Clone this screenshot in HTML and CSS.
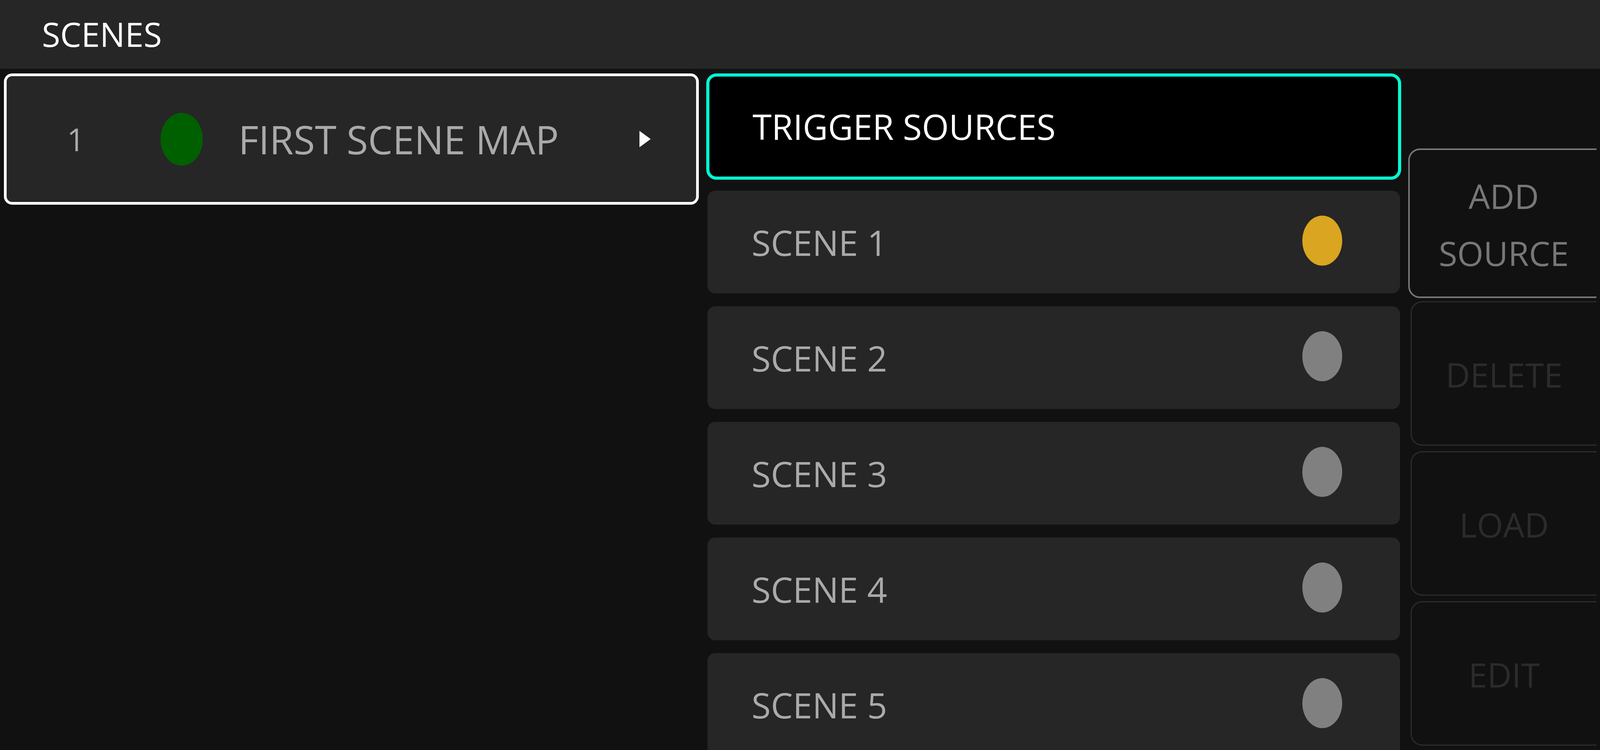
FILE: index.html
```html
<!DOCTYPE html>
<html lang="en">
<head>
<meta charset="utf-8">
<title>Scenes</title>
<link rel="stylesheet" href="styles.css">
</head>
<body>
<header class="topbar">
  <h1 class="topbar-title">SCENES</h1>
</header>
<main class="workspace">
  <section class="maps">
    <div class="map-card">
      <span class="map-num">1</span>
      <span class="map-dot"></span>
      <span class="map-name">FIRST SCENE MAP</span>
      <svg class="map-arrow" viewBox="0 0 36 42" preserveAspectRatio="none"><polygon points="0,0 36,21 0,42" fill="#fff"/></svg>
    </div>
  </section>
  <section class="sources">
    <div class="sources-head">TRIGGER SOURCES</div>
    <div class="source-row"><span class="source-name">SCENE 1</span><span class="dot dot-active"></span></div>
    <div class="source-row"><span class="source-name">SCENE 2</span><span class="dot"></span></div>
    <div class="source-row"><span class="source-name">SCENE 3</span><span class="dot"></span></div>
    <div class="source-row"><span class="source-name">SCENE 4</span><span class="dot"></span></div>
    <div class="source-row"><span class="source-name">SCENE 5</span><span class="dot"></span></div>
  </section>
  <aside class="actions">
    <div class="action action-primary"><span>ADD<br>SOURCE</span></div>
    <div class="action action-disabled"><span>DELETE</span></div>
    <div class="action action-disabled"><span>LOAD</span></div>
    <div class="action action-disabled"><span>EDIT</span></div>
  </aside>
</main>
</body>
</html>
```
FILE: styles.css
```css
/* Horizontal measures are in vw (designed on a 5120px-wide screen, 1vw = 51.2px);
   vertical measures are in px (1920px-tall screen). */
html, body {
  margin: 0;
  padding: 0;
}
body {
  width: 100vw;
  height: 1920px;
  overflow: hidden;
  background: #111111;
  font-family: "Open Sans", "Noto Sans", sans-serif;
  color: #aaaaaa;
}

/* top bar */
.topbar {
  height: 176px;
  background: #262626;
  display: flex;
  align-items: center;
  padding-left: 2.617vw;
}
.topbar-title {
  margin: 0;
  font-size: 2.09vw;
  font-weight: 400;
  line-height: 1;
  color: #ffffff;
}

/* layout */
.workspace {
  display: flex;
  align-items: flex-start;
  padding: 12px 0 0 0.234vw;
}

/* left: scene maps */
.maps {
  width: 43.44vw;
  flex: none;
}
.map-card {
  box-sizing: border-box;
  height: 336px;
  border: 7px solid #ffffff;
  border-radius: 21px;
  background: #262626;
  display: flex;
  align-items: center;
  padding: 0 2.83vw 0 3.36vw;
}
.map-num {
  width: 1.953vw;
  text-align: center;
  font-size: 1.953vw;
  line-height: 1;
  color: #aaaaaa;
}
.map-dot {
  width: 2.637vw;
  height: 135px;
  border-radius: 50%;
  background: #006000;
  margin-left: 4.316vw;
  flex: none;
}
.map-name {
  margin-left: 2.227vw;
  font-size: 2.441vw;
  line-height: 1;
  color: #aaaaaa;
  white-space: nowrap;
}
.map-arrow {
  margin-left: auto;
  display: block;
  width: 0.703vw;
  height: 42px;
  flex: none;
}

/* middle: trigger sources */
.sources {
  width: 43.42vw;
  margin-left: 0.469vw;
  flex: none;
  display: flex;
  flex-direction: column;
}
.sources-head {
  box-sizing: border-box;
  height: 272px;
  border: 8px solid #02fcd3;
  border-radius: 26px;
  background: #000000;
  color: #ffffff;
  font-size: 2.168vw;
  line-height: 1;
  display: flex;
  align-items: center;
  padding-left: 2.695vw;
  margin-bottom: 28px;
}
.source-row {
  box-sizing: border-box;
  height: 263px;
  margin: 0 0.059vw 33px 0.078vw;
  border-radius: 20px;
  background: #262626;
  display: flex;
  align-items: center;
  justify-content: space-between;
  padding: 3px 3.613vw 0 2.754vw;
}
.source-name {
  font-size: 2.1875vw;
  line-height: 1;
  color: #aaaaaa;
}
.dot {
  width: 2.5vw;
  height: 128px;
  border-radius: 50%;
  background: #808080;
  margin-bottom: 10px;
  flex: none;
}
.dot-active {
  background: #daa520;
}

/* right: actions */
.actions {
  width: 11.758vw;
  margin-left: 0.449vw;
  margin-top: 192px;
  flex: none;
  overflow: hidden;
  display: flex;
  flex-direction: column;
  gap: 14px;
}
.action {
  box-sizing: border-box;
  width: 12.5vw;
  height: 370px;
  flex: none;
  border-radius: 30px;
  display: flex;
  align-items: center;
  justify-content: center;
  text-align: center;
  font-size: 2.109vw;
  line-height: 146px;
  background: #111111;
}
.action-primary {
  height: 383px;
  border: 4px solid #777777;
  color: #777777;
  padding: 6px 0.547vw 0 0;
  margin-bottom: -6px;
}
.action-disabled {
  margin-left: 0.156vw;
  border: 3px solid #2b2b2b;
  color: #2b2b2b;
  padding: 6px 0.82vw 0 0;
}
```
